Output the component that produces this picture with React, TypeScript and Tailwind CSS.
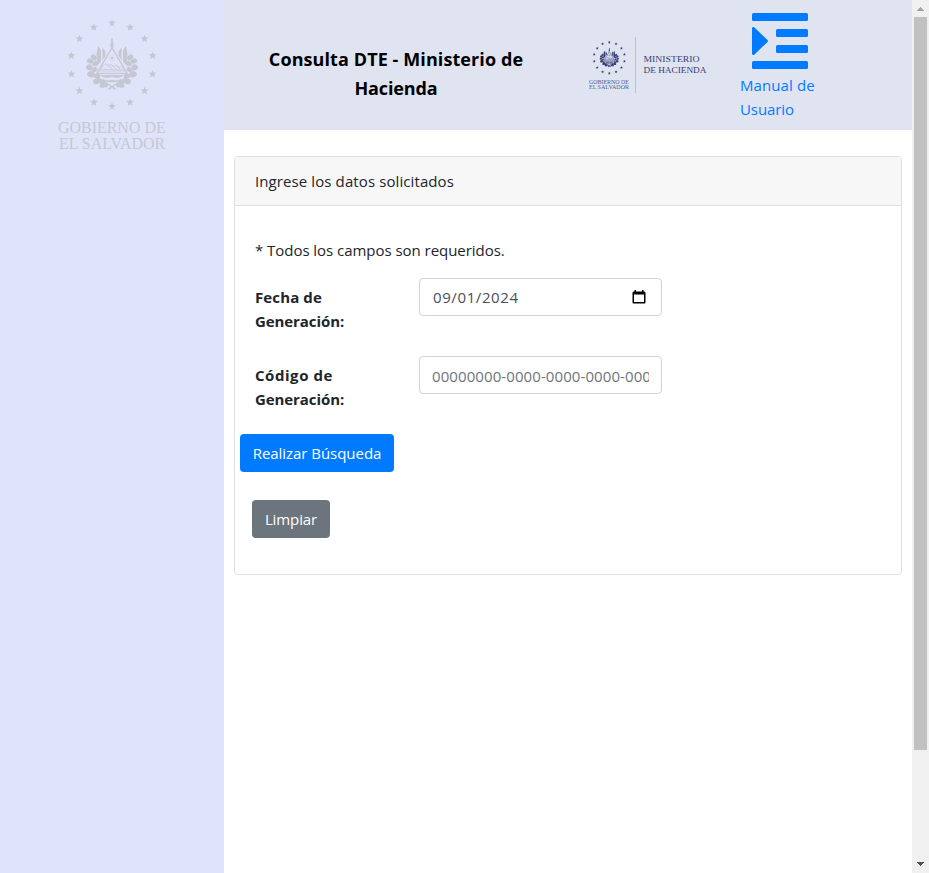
import type { ReactNode } from "react";

const STAR = "0,-12 3,-4 12,-3.7 5,2 7.5,11 0,6 -7.5,11 -5,2 -12,-3.7 -3,-4";

function Emblem({ paper }: { paper: string }) {
  const stars = Array.from({ length: 14 }, (_, i) => {
    const a = (i * Math.PI * 2) / 14;
    return [Math.sin(a) * 125, -Math.cos(a) * 125];
  });
  const side = (
    <g>
      <path d="M-42-57l9 14v34l-13 14v-40zM-29-53l9 14v14l-9 12z" />
      <path d="M-57-38l8 12v18l-8-4z" opacity=".55" />
      <path d="M-58-22c-8 14-12 40 8 62" fill="none" stroke="currentColor" strokeWidth="2.5" />
      <ellipse cx="-55" cy="-22" rx="10" ry="7" transform="rotate(40 -55 -22)" />
      <ellipse cx="-66" cy="-11" rx="10" ry="7" transform="rotate(20 -66 -11)" />
      <ellipse cx="-51" cy="-3" rx="9" ry="7" transform="rotate(-30 -51 -3)" />
      <ellipse cx="-68" cy="8" rx="10" ry="8" transform="rotate(15 -68 8)" />
      <ellipse cx="-52" cy="15" rx="9" ry="7" transform="rotate(-35 -52 15)" />
      <ellipse cx="-63" cy="29" rx="12" ry="9" transform="rotate(15 -63 29)" />
      <ellipse cx="-45" cy="34" rx="10" ry="7" />
      <ellipse cx="-44" cy="49" rx="13" ry="9" transform="rotate(-20 -44 49)" />
      <circle cx="-28" cy="52" r="8" />
      <circle cx="-20" cy="60" r="8" />
      <circle cx="-30" cy="63" r="7" />
      <path d="M-36 31h36v6c-12 4-29 3-36-6zM-30 42c9 5 18 6 30 3v7c-12 2-24 0-30-10z" />
      <path d="M-14 55L12 71l-4 5-23-17z" />
    </g>
  );
  return (
    <g>
      {stars.map(([x, y], i) => (
        <polygon key={i} points={STAR} transform={`translate(${x} ${y})`} />
      ))}
      {side}
      <g transform="scale(-1 1)">{side}</g>
      <path d="M-2-80h4l3 28h-10z" />
      <path d="M0-51L45 26H-45z" fill={paper} stroke="currentColor" strokeWidth="4" />
      <circle cy="-20" r="9" fill="none" stroke="currentColor" strokeWidth="2" strokeDasharray="2 2" />
      <circle cy="-20" r="4" />
      <path d="M-36 14l16-17 9 6 8-4 8 6 8-4 8 6 8-2 11 11zM-38 19h76" fill="none" stroke="currentColor" strokeWidth="2.2" />
      <path d="M-16-1L2 14M-2 1l15 13M12 3l13 11" stroke="currentColor" strokeWidth="2.5" />
    </g>
  );
}

function SidebarLogo() {
  return (
    <svg className="mt-[5px] ml-10 h-[155px] w-[145px] text-[#c5c8d2]" viewBox="0 0 435 465" fill="currentColor">
      <g transform="translate(216 179)">
        <Emblem paper="#e0e4fa" />
      </g>
      <g fontFamily="'Liberation Serif', serif" fontSize="48">
        <text x="54" y="384" textLength="323" lengthAdjust="spacingAndGlyphs">GOBIERNO DE</text>
        <text x="57" y="432" textLength="318" lengthAdjust="spacingAndGlyphs">EL SALVADOR</text>
      </g>
    </svg>
  );
}

function MinistryLogo() {
  return (
    <svg className="h-[64px] w-[124px] shrink-0 text-[#343b78]" viewBox="585 32 124 64" fill="currentColor">
      <g transform="translate(609.3 57.8) scale(.124)">
        <Emblem paper="#e0e4f0" />
      </g>
      <rect x="635" y="37" width="1" height="56" fill="#b9bddd" />
      <g fontFamily="'Liberation Serif', serif">
        <g fill="#555b8e">
          <text x="589" y="83.5" fontSize="6.3" textLength="40" lengthAdjust="spacingAndGlyphs">GOBIERNO DE</text>
          <text x="589" y="89.3" fontSize="6.3" textLength="40" lengthAdjust="spacingAndGlyphs">EL SALVADOR</text>
        </g>
        <text x="643.5" y="62.3" fontSize="8.8" textLength="56" lengthAdjust="spacingAndGlyphs">MINISTERIO</text>
        <text x="643.5" y="73.3" fontSize="8.8" textLength="63" lengthAdjust="spacingAndGlyphs">DE HACIENDA</text>
      </g>
    </svg>
  );
}

function Field({ label, children }: { label: ReactNode; children: ReactNode }) {
  return (
    <div className="flex h-[78px] items-start">
      <label className="w-[164px] pt-[7px] text-[15px] font-bold leading-6">
        {label}
        <br />
        <span className="tracking-[-0.08px]">Generación:</span>
      </label>
      <div className="flex h-[38px] w-[243px] items-center justify-between rounded-[4px] border border-[#ced4da] bg-white px-3">
        {children}
      </div>
    </div>
  );
}

function Scrollbar() {
  return (
    <div className="flex w-[17px] shrink-0 flex-col items-center bg-[#f0f0f0]">
      <svg className="h-[17px] w-[17px] shrink-0" viewBox="0 0 17 17" shapeRendering="crispEdges">
        <path d="M5 11V10h1V9h1V8h1V7h1v1h1v1h1v1h1v1z" fill="#a3a3a3" />
      </svg>
      <div className="h-[733px] w-[13px] bg-[#c1c1c1]" />
      <svg className="mt-auto h-[17px] w-[17px] shrink-0" viewBox="0 0 17 17" shapeRendering="crispEdges">
        <path d="M5 6h7v1h-1v1h-1v1H9v1H8V9H7V8H6V7H5z" fill="#505050" />
      </svg>
    </div>
  );
}

export default function App() {
  return (
    <div className="flex h-[873px] w-[929px] overflow-hidden bg-white font-['Open_Sans',sans-serif] text-[15px] leading-6 text-[#212529]">
      <aside className="w-[224px] shrink-0 bg-[#e0e4fa]">
        <SidebarLogo />
      </aside>
      <main className="flex flex-1 flex-col">
        <header className="flex h-[130px] shrink-0 bg-[#e0e4f0]">
          <h1 className="ml-[30px] w-[284px] shrink-0 pt-[45px] text-center text-[18px] font-bold leading-[29px] text-black">
            <span className="tracking-[0.09px]">Consulta DTE - Ministerio de</span>
            <br />
            <span className="tracking-[-0.12px]">Hacienda</span>
          </h1>
          <div className="ml-[47px] pt-8">
            <MinistryLogo />
          </div>
          <a className="ml-[31px] block pt-[13px] text-[#007bff]" href="#">
            <svg className="ml-3 h-14 w-14" viewBox="0 0 56 56" fill="currentColor">
              <rect width="56" height="8" rx="1.5" />
              <rect x="24" y="16" width="32" height="8" rx="1.5" />
              <rect x="24" y="32" width="32" height="8" rx="1.5" />
              <rect y="48" width="56" height="8" rx="1.5" />
              <path d="M0 15.5c0-1.4 1.5-2 2.5-1L15.5 27q1 1 0 2L2.5 41.5c-1 1-2.5.4-2.5-1z" />
            </svg>
            <span className="mt-1 block tracking-[0.1px]">
              Manual de
              <br />
              <span className="tracking-[-0.1px]">Usuario</span>
            </span>
          </a>
        </header>
        <section className="mx-[10px] mt-[26px] flex h-[419px] flex-col rounded-[4px] border border-[#dfdfdf]">
          <div className="flex h-[49px] shrink-0 items-center rounded-t-[3px] border-b border-[#dfdfdf] bg-[#f7f7f7] px-5 tracking-[0.1px]">
            Ingrese los datos solicitados
          </div>
          <div className="px-5 pt-8">
            <p className="mb-4 tracking-[-0.04px]">* Todos los campos son requeridos.</p>
            <Field label={<span className="tracking-[0.12px]">Fecha de</span>}>
              <span className="pl-px tracking-[0.6px] text-[#495057]">09/01/2024</span>
              <svg className="mr-[3px] h-[14px] w-[14px]" viewBox="0 0 14 14">
                <path d="M2.5 0H4v1.5h6V0h1.5v1.5H12q1.5 0 1.5 1.3V12.5q0 1-1 1h-11q-1 0-1-1V2.8Q.5 1.5 2 1.5h.5zM2 4.5V12h10V4.5z" fill="#000" fillRule="evenodd" />
              </svg>
            </Field>
            <Field label={<span className="tracking-[0.55px]">Código de</span>}>
              <input
                className="w-full bg-transparent pt-px tracking-[0.09px] outline-none placeholder:text-[#6c757d]"
                placeholder="00000000-0000-0000-0000-000000000000"
              />
            </Field>
          </div>
          <button className="ml-[5px] h-[38px] w-[154px] rounded-[4px] bg-[#007bff] tracking-[-0.04px] text-white">Realizar Búsqueda</button>
          <button className="mt-7 ml-[17px] h-[38px] w-[78px] rounded-[4px] bg-[#6c757d] tracking-[-0.1px] text-white">Limpiar</button>
        </section>
      </main>
      <Scrollbar />
    </div>
  );
}
